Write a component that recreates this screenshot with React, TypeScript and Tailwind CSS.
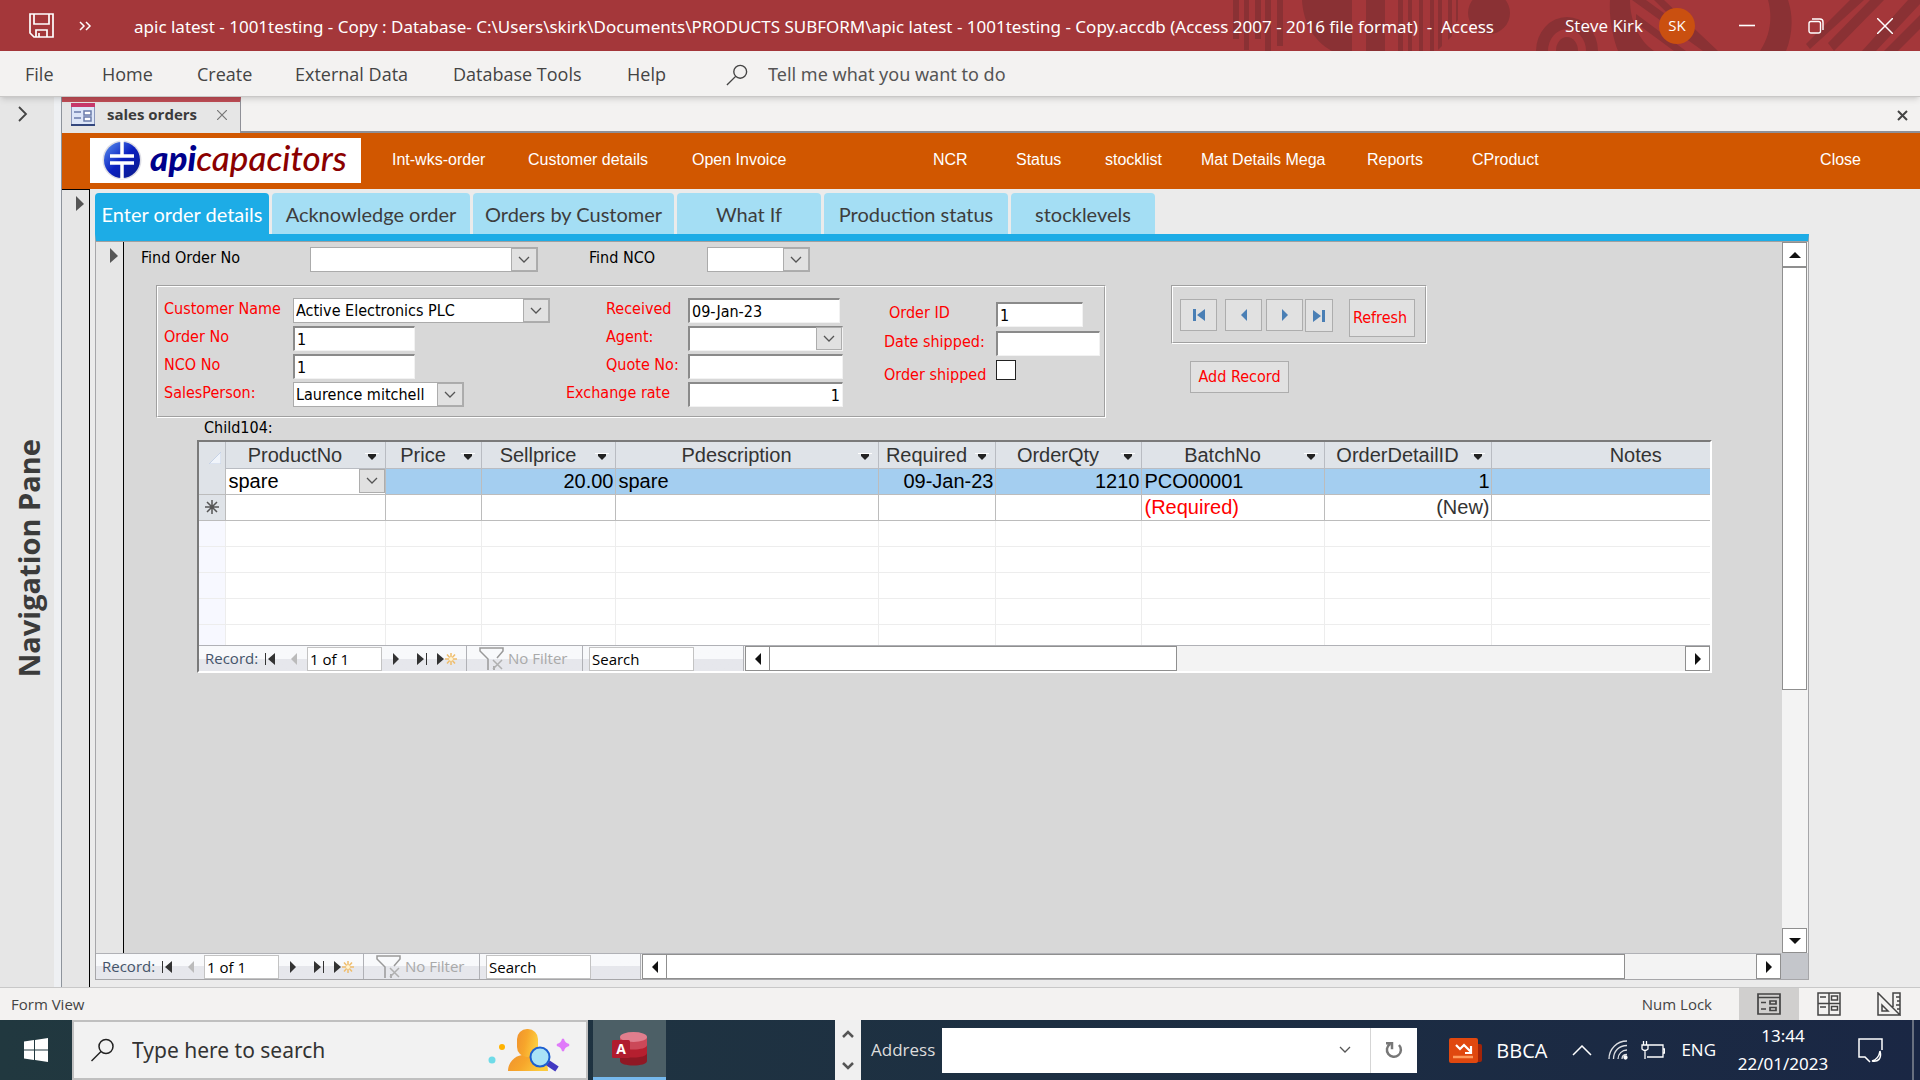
import { ReactNode, useState } from "react";
import clsx from "clsx";

const menuItems = [
  { label: "File", width: "w-[77px]" },
  { label: "Home", width: "w-[95px]" },
  { label: "Create", width: "w-[98px]" },
  { label: "External Data", width: "w-[158px]" },
  { label: "Database Tools", width: "w-[174px]" },
  { label: "Help", width: "w-[99px]" },
];

const formLinks = [
  { label: "Int-wks-order", width: "w-[136px]" },
  { label: "Customer details", width: "w-[164px]" },
  { label: "Open Invoice", width: "w-[241px]" },
  { label: "NCR", width: "w-[83px]" },
  { label: "Status", width: "w-[89px]" },
  { label: "stocklist", width: "w-[96px]" },
  { label: "Mat Details Mega", width: "w-[166px]" },
  { label: "Reports", width: "w-[105px]" },
  { label: "CProduct", width: "w-[90px]" },
];

const tabs = [
  { label: "Enter order details", width: "w-[174px]" },
  { label: "Acknowledge order", width: "w-[198px]" },
  { label: "Orders by Customer", width: "w-[201px]" },
  { label: "What If", width: "w-[144px]" },
  { label: "Production status", width: "w-[184px]" },
  { label: "stocklevels", width: "w-[144px]" },
];

const columns = [
  { name: "ProductNo", width: "w-[160px]" },
  { name: "Price", width: "w-[96px]" },
  { name: "Sellprice", width: "w-[134px]", right: true },
  { name: "Pdescription", width: "w-[263px]" },
  { name: "Required", width: "w-[117px]", right: true },
  { name: "OrderQty", width: "w-[146px]", right: true },
  { name: "BatchNo", width: "w-[183px]" },
  { name: "OrderDetailID", width: "w-[167px]", right: true },
  { name: "Notes", width: "w-auto" },
];

const orderLine = ["spare", "", "20.00", "spare", "09-Jan-23", "1210", "PCO00001", "1", ""];
const newLine = ["", "", "", "", "", "", "(Required)", "(New)", ""];

const Chevron = ({ className = "" }: { className?: string }) => (
  <svg viewBox="0 0 12 8" className={clsx("w-3 h-2", className)} fill="none" stroke="#555" strokeWidth="1.3">
    <path d="M1 1l5 5 5-5" />
  </svg>
);

const Triangle = ({ dir, className = "" }: { dir: "up" | "down" | "left" | "right"; className?: string }) => {
  const paths = {
    up: "M0 9h12L6 3z",
    down: "M0 3h12L6 9z",
    left: "M9 0v12L3 6z",
    right: "M3 0v12l6-6z",
  };
  return (
    <svg viewBox="0 0 12 12" className={clsx("w-3 h-3", className)} fill="currentColor">
      <path d={paths[dir]} />
    </svg>
  );
};

const SearchIcon = ({ className }: { className: string }) => (
  <svg viewBox="0 0 24 24" className={className} fill="none" stroke="currentColor" strokeWidth="1.5">
    <circle cx="15.5" cy="8.5" r="7" />
    <path d="M10.5 13.5L1 23" />
  </svg>
);

const TitleBar = () => (
  <header className="relative flex items-center h-[51px] bg-[#a4373a] text-white overflow-hidden">
    <svg className="absolute right-0 top-0 w-[688px] h-[51px]" viewBox="1232 0 688 51" fill="#8a3134">
      <path d="M1233 0h6v39h-6zM1244 0h5v50h-5zM1255 0h6v39h-6zM1265 0h6v51h-6zM1277 0h6v46h-6z" />
      <path d="M1302 0h50v51h-20C1312 40 1303 20 1302 0zM1366 0h19v51h-19zM1398 0h5v51h-5zM1408 0h4v51h-4zM1419 0h4v51h-4zM1430 0h4v51h-4zM1438 0h4v46l-4 4zM1448 0h4v36l-4 4zM1456 0h2v20l-2 3z" />
      <circle cx="1489" cy="13" r="21" />
      <path d="M1536 51a31 34 0 0 1 62 0h-12a19 22 0 0 0-38 0z" />
      <path d="M1556 51a11 14 0 0 1 22 0z" />
      <path d="M1610 0h20c0 20 8 40 24 51h-36c-6-16-9-34-8-51zM1768 0h20c6 18 4 36-2 51h-26c10-15 13-33 8-51z" />
      <path d="M1632 0h14l70 51h-13zM1654 0h10l54 51h-12zM1636 14l50 37h-12l-38-28z" />
      <path d="M1806 44L1850 0h14l-54 49zM1828 43L1870 0h14l-50 51zM1862 51L1908 0h12v4l-44 47zM1884 51l36-36v14l-22 22z" />
    </svg>
    <button aria-label="Save" className="relative ml-[29px]">
      <svg viewBox="0 0 25 25" className="w-[25px] h-[25px]" fill="none" stroke="#fff" strokeWidth="1.7">
        <path d="M1 1h23v23H5l-4-4zM5 1v10h15V1M7 24v-7h11v7M10 24v-4" />
      </svg>
    </button>
    <button aria-label="Customize Quick Access Toolbar" className="relative ml-[25px]">
      <svg viewBox="0 0 13 10" className="w-[13px] h-[10px]" fill="none" stroke="#fff" strokeWidth="1.5">
        <path d="M1 1l4 4-4 4M7 1l4 4-4 4" />
      </svg>
    </button>
    <h1 className="relative ml-[42px] pt-[2px] font-['Noto_Sans',sans-serif] text-[17px] whitespace-pre">
      {"apic latest - 1001testing - Copy : Database- C:\\Users\\skirk\\Documents\\PRODUCTS SUBFORM\\apic latest - 1001testing - Copy.accdb (Access 2007 - 2016 file format)  -  Access"}
    </h1>
    <div className="relative ml-auto flex items-center">
      <span className="text-[17px] whitespace-nowrap">Steve Kirk</span>
      <span className="ml-4 flex items-center justify-center size-9 rounded-full bg-[#ca5010] text-[15px]">SK</span>
      <button aria-label="Minimize" className="ml-11">
        <svg viewBox="0 0 16 16" className="size-4" stroke="#fff" strokeWidth="1.6"><path d="M0 7.5h16" /></svg>
      </button>
      <button aria-label="Restore" className="ml-[53px]">
        <svg viewBox="0 0 16 16" className="size-4" fill="none" stroke="#fff" strokeWidth="1.4">
          <rect x="1" y="3.500" width="11.500" height="11.500" rx="2" />
          <path d="M4 1h8a3 3 0 0 1 3 3v8" />
        </svg>
      </button>
      <button aria-label="Close window" className="ml-[53px] mr-[27px]">
        <svg viewBox="0 0 16 16" className="size-4" stroke="#fff" strokeWidth="1.5"><path d="M0 0l16 16M16 0L0 16" /></svg>
      </button>
    </div>
  </header>
);

const Ribbon = () => (
  <nav className="relative z-10 flex items-center h-[46px] pl-[25px] pt-[2px] bg-[#f3f2f1] border-b border-[#c9c8c7] shadow-md text-[18px] text-[#444]">
    {menuItems.map((item) => (
      <button key={item.label} className={clsx("shrink-0 text-left whitespace-nowrap", item.width)}>
        {item.label}
      </button>
    ))}
    <label className="flex flex-1 items-center gap-5 font-['Noto_Sans',sans-serif]">
      <SearchIcon className="w-[22px] h-[22px]" />
      <input
        placeholder="Tell me what you want to do"
        aria-label="Tell me what you want to do"
        className="w-80 bg-transparent placeholder:text-[#555] outline-none"
      />
    </label>
  </nav>
);

const NavigationPane = () => (
  <aside className="flex w-[62px] shrink-0 border-r border-[#8e949c] bg-[#eef0f3]">
    <div className="flex flex-col items-center w-[54px] bg-[#e6e6e6]">
      <button aria-label="Open navigation pane" className="mt-[9px] mr-2">
        <svg viewBox="0 0 10 16" className="w-[10px] h-4" fill="none" stroke="#444" strokeWidth="1.8">
          <path d="M1 1l7 7-7 7" />
        </svg>
      </button>
      <div className="flex flex-1 items-center pt-2 pl-1">
        <span className="rotate-180 [writing-mode:vertical-rl] text-[29px] leading-8 font-bold text-[#3b3b3b] whitespace-nowrap">
          Navigation Pane
        </span>
      </div>
    </div>
  </aside>
);

const DocumentTab = () => (
  <div className="flex items-start h-9 bg-[#f3f2f1] border-b-2 border-[#8f9097]">
    <div className="flex items-center h-9 w-[179px] pl-[9px] pb-[6px] border-t-[5px] border-t-[#bf4d55] border-r border-r-[#8f9097] bg-[#e6e6e6]">
      <svg viewBox="0 0 24 23" className="w-6 h-[23px]">
        <rect x="0.500" y="0.500" width="23" height="22" fill="#dde6f8" stroke="#8a97bb" />
        <path d="M0 0h24v4H0z" fill="#c8396b" />
        <path d="M0 22h24" stroke="#33477e" strokeWidth="2" />
        <path d="M3 9h7M3 15h7" stroke="#6b7cab" strokeWidth="1.500" />
        <path d="M13 8h7v4h-7zM13 14h7v4h-7z" fill="#fff" stroke="#6b7cab" strokeWidth="1.500" />
      </svg>
      <span className="ml-3 text-[15px] font-bold text-[#3b3b3b] whitespace-nowrap">sales orders</span>
      <button aria-label="Close tab" className="ml-5">
        <svg viewBox="0 0 10 10" className="size-[10px]" stroke="#777" strokeWidth="1.200"><path d="M0 0l10 10M10 0L0 10" /></svg>
      </button>
    </div>
    <button aria-label="Close form" className="ml-auto mr-3 mt-[13px]">
      <svg viewBox="0 0 11 11" className="size-[11px]" stroke="#444" strokeWidth="2"><path d="M1 1l9 9M10 1L1 10" /></svg>
    </button>
  </div>
);

const Logo = () => (
  <div className="flex items-center w-[271px] h-[45px] pl-3 bg-white overflow-hidden">
    <svg viewBox="0 0 40 40" className="size-10 shrink-0">
      <defs>
        <linearGradient id="ball" x1="0" y1="0" x2="1" y2="1">
          <stop offset="0" stopColor="#5b93f0" />
          <stop offset="0.500" stopColor="#0a1fc0" />
          <stop offset="1" stopColor="#0b1a86" />
        </linearGradient>
      </defs>
      <circle cx="20" cy="20" r="19.500" fill="#dcdce4" />
      <circle cx="20" cy="20" r="18" fill="url(#ball)" />
      <path d="M20 0v16M8 16h24M8 23h24M20 23v16" stroke="#fff" strokeWidth="3.500" />
    </svg>
    <span className="ml-2 pb-[6px] font-[Lato,sans-serif] italic font-medium text-[35px] leading-10 text-[#8b0000]">
      <b className="font-black text-[#00008b]">api</b>capacitors
    </span>
  </div>
);

const fieldClass =
  "h-[25px] px-[2px] bg-white text-black outline-none border border-t-2 border-l-2 border-t-[#8a8a8a] border-l-[#8a8a8a] border-r-[#f2f2f2] border-b-[#f2f2f2] rounded-none";

const TextField = ({ id, value = "", className }: { id: string; value?: string; className: string }) => (
  <input id={id} defaultValue={value} className={clsx(fieldClass, className)} />
);

const ComboBox = ({ id, value = "", className, sunken = false }: { id: string; value?: string; className: string; sunken?: boolean }) => (
  <div className={clsx("relative h-[25px]", className)}>
    <select
      id={id}
      defaultValue={value}
      className={clsx(
        "appearance-none block w-full outline-none",
        sunken ? fieldClass : "h-[25px] px-[2px] bg-white text-black border border-[#ababab]"
      )}
    >
      <option>{value}</option>
    </select>
    <span className="absolute right-px top-px h-[23px] w-[26px] flex items-center justify-center bg-[#e1e1e1] border border-[#adadad] pointer-events-none">
      <Chevron />
    </span>
  </div>
);

const Label = ({ htmlFor, children, className = "text-[#f00]" }: { htmlFor: string; children: ReactNode; className?: string }) => (
  <label htmlFor={htmlFor} className={clsx("leading-[22px] whitespace-nowrap", className)}>
    {children}
  </label>
);

// Etched frame: grey outside, white inside, reversed on the far edges
const Frame = ({ className, children }: { className: string; children: ReactNode }) => (
  <div className="border border-l-[#a0a0a0] border-t-[#a0a0a0] border-r-white border-b-white">
    <div className={clsx("border border-l-white border-t-white border-r-[#a0a0a0] border-b-[#a0a0a0]", className)}>
      {children}
    </div>
  </div>
);

const FormButton = ({ label, className, children }: { label: string; className: string; children: ReactNode }) => (
  <button aria-label={label} className={clsx("flex items-center justify-center bg-[#e1e1e1] border border-[#adadad]", className)}>
    {children}
  </button>
);

const RecordSelector = ({ className }: { className: string }) => (
  <div className={clsx("shrink-0 flex justify-end bg-[#e6e6e6] border-r border-black pt-[6px]", className)}>
    <svg viewBox="0 0 8 15" className="w-2 h-[15px]" fill="#555"><path d="M0 0v15l8-7z" /></svg>
  </div>
);

const ScrollButton = ({ dir }: { dir: "up" | "down" | "left" | "right" }) => (
  <button aria-label={`Scroll ${dir}`} className="shrink-0 flex items-center justify-center size-[25px] bg-white border border-[#8f8f8f] text-[#111]">
    <Triangle dir={dir} />
  </button>
);

const RecordNav = ({ name, thumb }: { name: string; thumb: string }) => (
  <div className="flex h-[26px] border-t border-[#b0b1b6] bg-[#f3f3f3] text-[15px] text-[#444]">
    <div className="flex items-center w-[545px] shrink-0 border-r border-[#b0b1b6] bg-linear-to-b from-[#f8f9fb] from-50% to-[#e6e7ec] to-50% [&_svg]:shrink-0">
      <span className="w-[65px] pl-[6px] text-[#44546a]">Record:</span>
      <button aria-label="First record" className="w-[24px]">
        <svg viewBox="0 0 12 12" className="w-3 h-3" fill="#333"><path d="M1 0h1v12H1zM11 0v12L4 6z" /></svg>
      </button>
      <button aria-label="Previous record" className="w-[19px] text-[#bbb]"><Triangle dir="left" /></button>
      <input
        aria-label={`${name} current record`}
        defaultValue="1 of 1"
        className="w-[75px] h-6 px-[2px] bg-white border border-[#c3c3c3] text-black outline-none"
      />
      <button aria-label="Next record" className="ml-2 w-[26px] text-[#333]"><Triangle dir="right" /></button>
      <button aria-label="Last record" className="w-[21px]">
        <svg viewBox="0 0 12 12" className="w-3 h-3" fill="#333"><path d="M10 0h1v12h-1zM1 0v12l7-6z" /></svg>
      </button>
      <button aria-label="New record" className="w-[29px]">
        <svg viewBox="0 0 20 12" className="w-5 h-3">
          <path d="M0 0v12l7-6z" fill="#333" />
          <path d="M14 0v12M8 6h12M10 1.500l8 9M18 1.500l-8 9" stroke="#efbd6c" strokeWidth="1.500" />
          <circle cx="14" cy="6" r="2" fill="#fff3d0" />
        </svg>
      </button>
      <button className="flex items-center self-stretch w-[117px] pl-3 border-x border-[#b0b1b6] text-[#a9a9a9] whitespace-nowrap">
        <svg viewBox="0 0 25 23" className="w-[25px] h-[23px]" fill="none" stroke="#999" strokeWidth="1.500">
          <path d="M18 11l6-7V1H1v3l8 8v11M15 23v-4" />
          <path d="M14 13l9 9M23 13l-9 9" stroke="#b0b0b0" />
        </svg>
        <span className="ml-1">No Filter</span>
      </button>
      <input
        aria-label={`${name} search`}
        defaultValue="Search"
        className="ml-[6px] w-[105px] h-6 px-[2px] bg-white border border-[#c3c3c3] text-black outline-none"
      />
    </div>
    <div className="flex flex-1 pl-px">
      <ScrollButton dir="left" />
      <div className="flex-1">
        <div className={clsx("h-[25px] bg-white border border-l-0 border-[#8f8f8f]", thumb)} />
      </div>
      <ScrollButton dir="right" />
    </div>
  </div>
);

const OrderLines = () => (
  <table className="w-full table-fixed border-collapse font-['Liberation_Sans',sans-serif] text-[20px] leading-6">
    <thead>
      <tr className="h-[26px] bg-[#dfe3e8] text-[#333]">
        <th className="w-[26px] p-0 align-bottom">
          <svg viewBox="0 0 12 12" className="ml-auto mr-1 mb-1 w-3 h-3"><path d="M12 0v12H0z" fill="#f0f4fa" stroke="#c6d2e6" /></svg>
        </th>
        {columns.map((column) => (
          <th key={column.name} className={clsx("p-0 font-normal border-l border-b border-[#b9bcc2]", column.width)}>
            {column.name === "Notes" ? (
              <div className="pl-[70px] text-center">Notes</div>
            ) : (
              <div className="flex items-center">
                <span className="flex-1 text-center">{column.name}</span>
                <svg viewBox="0 0 14 8" className="mt-1 mr-[6px] w-[14px] h-2">
                  <path d="M0 0h14" stroke="#fff" strokeWidth="2" />
                  <path d="M3 1h8v2L7 7 3 3z" fill="#222" />
                </svg>
              </div>
            )}
          </th>
        ))}
      </tr>
    </thead>
    <tbody>
      <tr className="h-[26px] bg-[#a4cef0] text-black">
        <th className="p-0 bg-[#dfe3e8]" />
        {orderLine.map((cell, index) => (
          <td
            key={index}
            className={clsx(
              "py-0 border-l border-b border-[#bcbcbc]",
              columns[index].right ? "px-px text-right" : "pl-[3px]",
              index === 0 && "bg-white"
            )}
          >
            {index === 0 ? (
              <div className="flex items-center justify-between">
                {cell}
                <button aria-label="Pick product" className="flex items-center justify-center w-[26px] h-6 bg-[#e1e1e1] border border-[#adadad]">
                  <Chevron />
                </button>
              </div>
            ) : (
              cell
            )}
          </td>
        ))}
      </tr>
      <tr className="h-[26px] bg-white">
        <th className="p-0 bg-[#dfe3e8] border-y border-[#bcbcbc]">
          <svg viewBox="0 0 14 14" className="mx-auto size-[14px]" stroke="#555" strokeWidth="1.500">
            <path d="M7 0v14M0 7h14M2 2l10 10M12 2L2 12" />
          </svg>
        </th>
        {newLine.map((cell, index) => (
          <td
            key={index}
            className={clsx(
              "py-0 border-l border-b border-[#bcbcbc]",
              cell === "(Required)" ? "text-[#f00]" : "text-[#333]",
              columns[index].right ? "px-px text-right" : "pl-[3px]"
            )}
          >
            {cell}
          </td>
        ))}
      </tr>
      {[0, 1, 2, 3].map((row) => (
        <tr key={row} className="h-[26px] bg-white">
          <td className="p-0 bg-[#f7f8ff] border-b border-[#ededed]" />
          {columns.map((column) => (
            <td key={column.name} className="p-0 border-l border-b border-[#ededed]" />
          ))}
        </tr>
      ))}
      <tr className="h-[21px] bg-white">
        <td className="p-0 bg-[#f7f8ff]" />
        {columns.map((column) => (
          <td key={column.name} className="p-0 border-l border-[#ededed]" />
        ))}
      </tr>
    </tbody>
  </table>
);

const OrderForm = () => (
  <div className="flex-1 min-w-0 bg-[#d8d8d8] pl-[17px] pr-[70px] pt-[5px] font-['DejaVu_Sans_Condensed','Noto_Sans',sans-serif] text-base">
    <div className="flex items-start h-[25px]">
      <Label htmlFor="find-order" className="w-[169px] text-black">Find Order No</Label>
      <ComboBox id="find-order" className="w-[228px]" />
      <Label htmlFor="find-nco" className="w-[118px] ml-[51px] text-black">Find NCO</Label>
      <ComboBox id="find-nco" className="w-[103px]" />
    </div>

    <div className="flex items-start mt-[13px] ml-[15px]">
      <Frame className="flex items-start w-[948px] h-[131px] pt-[11px] pl-[6px]">
        <div className="grid grid-cols-[129px_1fr] gap-y-[3px] w-[402px]">
          <Label htmlFor="customer">Customer Name</Label>
          <ComboBox id="customer" value="Active Electronics PLC" className="w-[257px]" />
          <Label htmlFor="order-no">Order No</Label>
          <TextField id="order-no" value="1" className="w-[122px]" />
          <Label htmlFor="nco-no">NCO No</Label>
          <TextField id="nco-no" value="1" className="w-[122px]" />
          <Label htmlFor="sales-person">SalesPerson:</Label>
          <ComboBox id="sales-person" value="Laurence mitchell" className="w-[171px]" />
        </div>
        <div className="grid grid-cols-[122px_1fr] gap-y-[3px] w-[318px]">
          <Label htmlFor="received" className="pl-10 text-[#f00]">Received</Label>
          <TextField id="received" value="09-Jan-23" className="w-[152px]" />
          <Label htmlFor="agent" className="pl-10 text-[#f00]">Agent:</Label>
          <ComboBox id="agent" sunken className="w-[155px]" />
          <Label htmlFor="quote-no" className="pl-10 text-[#f00]">Quote No:</Label>
          <TextField id="quote-no" className="w-[155px]" />
          <Label htmlFor="exchange">Exchange rate</Label>
          <TextField id="exchange" value="1" className="w-[155px] text-right" />
        </div>
        <div className="grid grid-cols-[112px_1fr] gap-y-1 mt-1">
          <Label htmlFor="order-id" className="pl-[5px] text-[#f00]">Order ID</Label>
          <TextField id="order-id" value="1" className="w-[87px]" />
          <Label htmlFor="date-shipped">Date shipped:</Label>
          <TextField id="date-shipped" className="w-[104px]" />
          <Label htmlFor="shipped" className="pt-1 text-[#f00]">Order shipped</Label>
          <input id="shipped" type="checkbox" className="appearance-none size-5 bg-white border border-[#222]" />
        </div>
      </Frame>

      <div className="ml-[65px]">
        <Frame className="flex items-start w-[254px] h-[57px] pt-3 pl-[7px] text-[#4a7fb5]">
          <FormButton label="First" className="w-[37px] h-8 mr-2">
            <svg viewBox="0 0 12 12" className="w-3 h-3" fill="currentColor"><path d="M0 0h3v12H0zM12 0v12L4 6z" /></svg>
          </FormButton>
          <FormButton label="Previous" className="w-[37px] h-8 mr-1"><Triangle dir="left" /></FormButton>
          <FormButton label="Next" className="w-[37px] h-8 mr-[2px]"><Triangle dir="right" /></FormButton>
          <FormButton label="Last" className="w-[28px] h-[33px] mr-4">
            <svg viewBox="0 0 12 12" className="w-3 h-3" fill="currentColor"><path d="M9 0h3v12H9zM0 0v12l8-6z" /></svg>
          </FormButton>
          <FormButton label="Refresh" className="w-[66px] h-[38px] pr-1 text-[#f00]">Refresh</FormButton>
        </Frame>
        <FormButton label="Add Record" className="w-[99px] h-8 mt-[17px] ml-[19px] text-[#f00] whitespace-nowrap">Add Record</FormButton>
      </div>
    </div>

    <section className="ml-14">
      <h2 className="pl-[7px] h-[22px] leading-5">Child104:</h2>
      <div className="border-2 border-[#7a7a7a] border-r-white border-b-white overflow-hidden font-['Open_Sans',sans-serif]">
        <OrderLines />
        <RecordNav name="Order lines" thumb="w-4/9" />
      </div>
    </section>
  </div>
);

const SalesOrders = () => {
  const [tab, setTab] = useState<string>("Enter order details");

  return (
    <div className="flex flex-1 bg-[#ebebeb]">
      <RecordSelector className="w-7 border-t pr-[5px]" />
      <div className="flex flex-col flex-1 min-w-0 ml-[5px] mr-[111px] pt-1 pb-[7px]">
        <div role="tablist" className="flex gap-[3px] h-[41px] font-[Lato,sans-serif] text-[20px] text-[#3d3d3d]">
          {tabs.map(({ label, width }) => (
            <button
              key={label}
              role="tab"
              aria-selected={label === tab}
              onClick={() => setTab(label)}
              className={clsx(
                "rounded-t-[4px] whitespace-nowrap",
                width,
                label === tab ? "bg-[#1dace6] text-white" : "bg-[#a4def4]"
              )}
            >
              {label}
            </button>
          ))}
        </div>
        <div className="flex flex-col flex-1 border border-t-[7px] border-[#a6a6a9] border-t-[#1dace6]">
          <div className="flex flex-1 border-t border-[#a0a0a0]">
            <RecordSelector className="w-[28px] pr-[5px]" />
            <OrderForm />
            <div className="flex flex-col w-[26px] shrink-0 bg-[#f3f3f3]">
              <ScrollButton dir="up" />
              <div className="flex-1">
                <div className="w-[25px] h-[64%] bg-white border border-[#8f8f8f]" />
              </div>
              <ScrollButton dir="down" />
            </div>
          </div>
          <div className="flex">
            <div className="flex-1"><RecordNav name="Orders" thumb="w-[88%]" /></div>
            <div className="w-[27px] bg-[#c4c6cb]" />
          </div>
        </div>
      </div>
    </div>
  );
};

const StatusBar = () => (
  <footer className="flex items-center h-[33px] pl-[11px] bg-[#f3f2f1] border-t border-[#c8c8c8] text-[15px] text-[#444]">
    <span>Form View</span>
    <span className="ml-auto mr-[27px]">Num Lock</span>
    <div className="flex self-stretch mr-px">
      <button aria-label="Form view" className="flex items-center justify-center w-[60px] bg-[#d0cfce]">
        <svg viewBox="0 0 24 22" className="w-6 h-[22px]" fill="none" stroke="#444" strokeWidth="1.700">
          <path d="M1 1h22v20H1zM1 4.500h22M4 9.500h5M4 16h5M13 8h6v3h-6zM13 14.500h6v3h-6z" />
        </svg>
      </button>
      <button aria-label="Layout view" className="flex items-center justify-center w-[60px]">
        <svg viewBox="0 0 24 24" className="w-6 h-6" fill="none" stroke="#444" strokeWidth="1.500">
          <path d="M1 1h22v22H1zM12 1v22M1 11.500h22M3 5h6M3 15h6M14.500 4h6v4h-6zM14.500 14.500h6v3.500h-6z" />
        </svg>
      </button>
      <button aria-label="Design view" className="flex items-center justify-center w-[60px]">
        <svg viewBox="0 0 24 24" className="w-6 h-6" fill="none" stroke="#444" strokeWidth="1.500">
          <path d="M1 1v22h22zM5 13v6h6zM16 15V1h7v22M23 5h-4M23 9h-3M23 13h-4M23 17h-3" />
        </svg>
      </button>
    </div>
  </footer>
);

const SearchArt = () => (
  <svg viewBox="0 0 82 44" className="w-[82px] h-11">
    <defs>
      <linearGradient id="person" x1="0" y1="0" x2="1" y2="0.300">
        <stop offset="0" stopColor="#f0922e" />
        <stop offset="0.500" stopColor="#f7a62b" />
        <stop offset="1" stopColor="#fccb3e" />
      </linearGradient>
    </defs>
    <circle cx="14" cy="19" r="3" fill="#ffb300" />
    <circle cx="4" cy="32" r="3.500" fill="#6fdbe8" />
    <path d="M20 43c0-8 6-15 14-16h12c9 1 14 8 14 16z" fill="url(#person)" />
    <rect x="29" y="1" width="21" height="28" rx="10" fill="url(#person)" />
    <path d="M60 35l9 6" stroke="#4138c2" strokeWidth="6" />
    <circle cx="52" cy="29" r="9.500" fill="#a9e2f7" stroke="#1d5fd0" strokeWidth="2" />
    <path d="M75 11q1 5 6 6-5 1-6 6-1-5-6-6 5-1 6-6z" fill="#e07bfa" stroke="#e07bfa" strokeWidth="2" />
  </svg>
);

const AccessIcon = () => (
  <svg viewBox="0 0 35 34" className="w-[35px] h-[34px]">
    <path d="M8 5v24c0 6 27 6 27 0V5z" fill="#8f1824" />
    <path d="M8 5v16c0 6 27 6 27 0V5z" fill="#b51f2f" />
    <path d="M8 5v8c0 6 27 6 27 0V5z" fill="#cb4858" />
    <ellipse cx="21.500" cy="5" rx="13.500" ry="5" fill="#e07e8d" />
    <rect x="0" y="8" width="18" height="18" rx="1.500" fill="#b01c2e" />
    <text x="9" y="22" textAnchor="middle" fill="#fff" fontSize="14" fontWeight="700" fontFamily="Open Sans, sans-serif">A</text>
  </svg>
);

const Taskbar = () => (
  <footer className="flex items-center h-[60px] bg-linear-to-r from-[#21383f] to-[#1a2744] text-white">
    <button aria-label="Start" className="flex items-center justify-center w-[72px] h-full shrink-0">
      <svg viewBox="0 0 24 24" className="w-6 h-6" fill="#fff">
        <path d="M0 3.500l10-1.400v9.400H0zM11 2l13-2v11.500H11zM0 12.500h10v9.400L0 20.500zM11 12.500h13V24l-13-2z" />
      </svg>
    </button>
    <label className="flex items-center w-[516px] h-full px-4 shrink-0 bg-[#f2f2f2] border-2 border-[#c0c0c0] text-[#222]">
      <SearchIcon className="w-[25px] h-6" />
      <input
        aria-label="Search Windows"
        placeholder="Type here to search"
        className="ml-[17px] pt-[2px] flex-1 min-w-0 bg-transparent font-['Noto_Sans',sans-serif] text-[21px] placeholder:text-[#333] outline-none"
      />
      <SearchArt />
    </label>
    <button aria-label="Access" className="flex items-center justify-center w-[73px] h-full ml-[5px] shrink-0 bg-[#4c5f66] border-b-[3px] border-[#76b9ed]">
      <AccessIcon />
    </button>
    <div className="flex flex-col items-center justify-between w-[26px] h-full py-[10px] ml-[169px] shrink-0 bg-[#f0f0f0]">
      <button aria-label="Scroll taskbar up" className="rotate-180"><svg viewBox="0 0 12 8" className="w-3 h-2" fill="none" stroke="#555" strokeWidth="2.500"><path d="M1 1l5 5 5-5" /></svg></button>
      <button aria-label="Scroll taskbar down"><svg viewBox="0 0 12 8" className="w-3 h-2" fill="none" stroke="#555" strokeWidth="2.500"><path d="M1 1l5 5 5-5" /></svg></button>
    </div>
    <label htmlFor="address" className="ml-[10px] w-[71px] text-[17px] text-[#ddd]">Address</label>
    <div className="flex items-center flex-1 h-[45px] bg-white">
      <input id="address" className="flex-1 min-w-0 h-full px-2 text-black outline-none" />
      <Chevron className="mr-[19px]" />
      <button aria-label="Refresh address" className="flex items-center justify-center w-[47px] h-full border-l border-[#d5d5d5]">
        <svg viewBox="0 0 18 18" className="w-[18px] h-[18px]" fill="none" stroke="#777" strokeWidth="2.500">
          <path d="M14 4a7 7 0 1 1-9-1M1 2.200h6v6" />
        </svg>
      </button>
    </div>
    <button className="flex items-center ml-8 pt-[2px] text-[20px]">
      <svg viewBox="0 0 33 26" className="w-[33px] h-[26px] mr-[14px]">
        <rect x="20" y="6" width="13" height="18" rx="2" fill="#a32408" />
        <rect width="29" height="25" rx="2" fill="#e0480f" />
        <path d="M7 7l4 4 4-4 7 7M22 8v7h-6" fill="none" stroke="#fff" strokeWidth="2.200" />
        <path d="M4 19h20" stroke="#ff9a5c" strokeWidth="2.500" />
      </svg>
      BBCA
    </button>
    <button aria-label="Show hidden icons" className="ml-[25px]">
      <svg viewBox="0 0 20 11" className="w-5 h-[11px]" fill="none" stroke="#fff" strokeWidth="1.500"><path d="M1 10l9-9 9 9" /></svg>
    </button>
    <svg viewBox="0 0 20 20" className="ml-4 w-5 h-5" fill="none" stroke="#fff" strokeWidth="1.300">
      <path d="M1 19C1 9 9 1 19 1M5.500 19C5.500 11 11 5.500 19 5.500M10 19c0-5 4-9 9-9M14 19c0-3 2-4.500 5-4.500" opacity="0.850" />
      <circle cx="17.500" cy="17.500" r="1.500" fill="#fff" />
    </svg>
    <svg viewBox="0 0 24 18" className="ml-[13px] w-6 h-[18px]" fill="none" stroke="#fff" strokeWidth="1.300">
      <path d="M7 4h15v12H6M22 8h1.500v4H22M1 4h6v4q-3 3-6 0zM2.500 4V0M5.500 4V0M4 9v9" />
    </svg>
    <span className="ml-4 text-[17px]">ENG</span>
    <div className="ml-5 w-[94px] text-center text-[17px] leading-7 font-['Noto_Sans',sans-serif]">
      <div>13:44</div>
      <div>22/01/2023</div>
    </div>
    <button aria-label="Notifications" className="ml-7 mr-[29px]">
      <svg viewBox="0 0 25 25" className="w-[25px] h-[25px]" fill="none" stroke="#fff" strokeWidth="1.500">
        <path d="M12 24l-5-5H1V1h23v11" />
        <path d="M22 13c2 8-2 11-8 10 4-1 7-4 8-10z" />
      </svg>
    </button>
    <div className="w-2 h-full border-l-2 border-[#68707f]" />
  </footer>
);

const App = () => {
  return (
    <div className="flex flex-col min-h-screen font-['Open_Sans',sans-serif]">
      <TitleBar />
      <Ribbon />
      <main className="flex flex-1">
        <NavigationPane />
        <div className="flex flex-col flex-1 min-w-0">
          <DocumentTab />
          <div className="flex items-center h-14 pl-7 pb-[2px] bg-[#d15700] font-['Liberation_Sans',sans-serif] text-base text-white">
            <Logo />
            <nav className="flex flex-1 pl-[31px]">
              {formLinks.map((link) => (
                <button key={link.label} className={clsx("shrink-0 text-left whitespace-nowrap", link.width)}>
                  {link.label}
                </button>
              ))}
              <button className="ml-auto mr-[59px]">Close</button>
            </nav>
          </div>
          <SalesOrders />
        </div>
      </main>
      <StatusBar />
      <Taskbar />
    </div>
  );
};

export default App;
